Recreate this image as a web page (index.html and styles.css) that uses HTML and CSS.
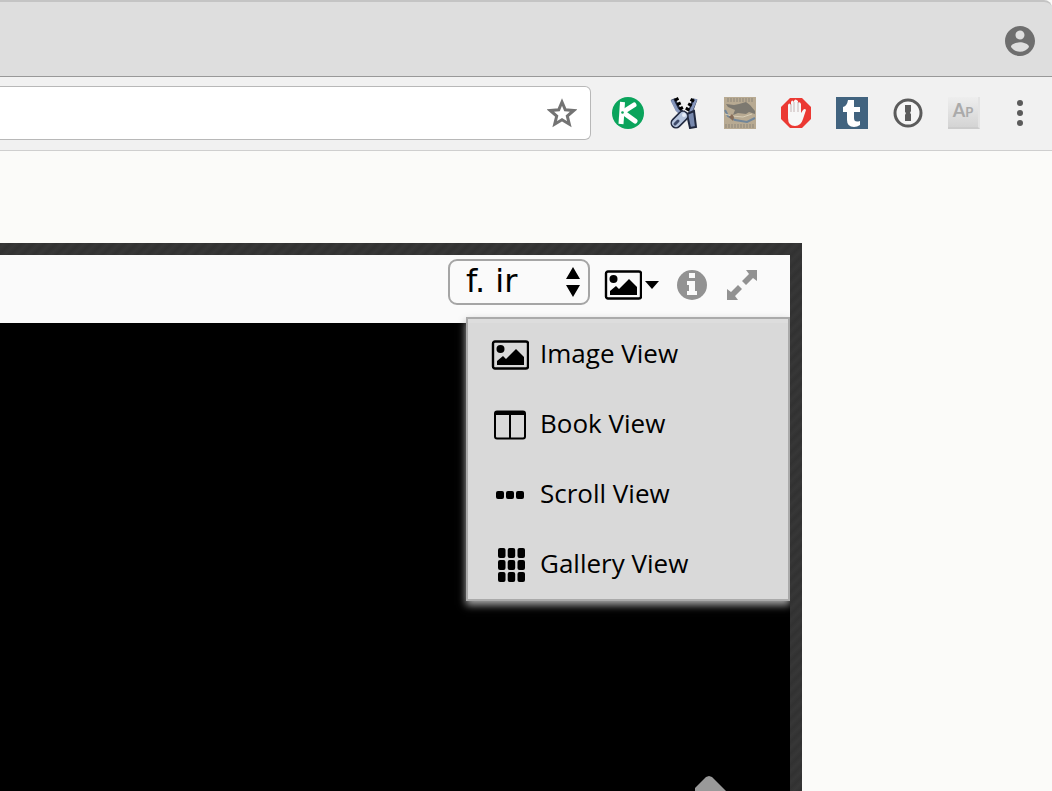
FILE: index.html
```
<!DOCTYPE html>
<html lang="en">
<head>
    <meta charset="utf-8">
    <title>Image Viewer</title>
    <link rel="stylesheet" href="styles.css">
</head>
<body>
    <div class="tab-strip">
        <button class="icon-button" aria-label="Profile">
            <svg width="36" height="36" viewBox="0 0 24 24"><path fill="#6e6e6e" d="M12 2C6.500 2 2 6.500 2 12s4.500 10 10 10 10-4.500 10-10S17.500 2 12 2zm0 3c1.700 0 3 1.300 3 3s-1.300 3-3 3-3-1.300-3-3 1.300-3 3-3zm0 14.200c-2.500 0-4.700-1.300-6-3.200 0-2 4-3.100 6-3.100s6 1.100 6 3.100c-1.300 1.900-3.500 3.200-6 3.200z"/></svg>
        </button>
    </div>
    <div class="browser-bar">
        <div class="address">
            <input type="text" aria-label="Address">
            <button class="icon-button" aria-label="Bookmark">
                <svg width="30" height="30" viewBox="0 0 30 30"><path fill="none" stroke="#737373" stroke-width="3" d="M15 4l3.300 7.800 8.400.7-6.400 5.500 2 8.200-7.300-4.400-7.300 4.400 2-8.200-6.400-5.500 8.400-.7z"/></svg>
            </button>
        </div>
        <div class="extensions">
            <button class="icon-button" aria-label="Kami">
                <svg width="32" height="32" viewBox="0 0 32 32"><circle cx="16" cy="16" r="16" fill="#0aa45c"/><path stroke="#fff" stroke-width="5" d="M10.500 5L9 27"/><path stroke="#fff" stroke-width="5" stroke-linecap="round" d="M11 15L22 8M12 16l11 8"/><circle cx="10.500" cy="15.500" r="1.300" fill="#0aa45c"/></svg>
            </button>
            <button class="icon-button" aria-label="Zipper">
                <svg width="32" height="32" viewBox="0 0 32 32"><path fill="none" stroke="#252d45" stroke-width="5" d="M5 2l5 10 6 6M27 2l-4 11 1 17"/><path fill="none" stroke="#8495bb" stroke-width="3" d="M4 3l5 10 7 6M28 2l-5 12v15"/><path stroke="#000" stroke-width="4" stroke-dasharray="3 2" d="M8 1l7 14M25 2l-7 13"/><path fill="#7788ad" stroke="#20283e" stroke-width="2" d="M19 17l7-3 2 16-6 1z"/><path stroke="#20283e" stroke-width="11" stroke-linecap="round" d="M15 19l-7 7"/><path stroke="#b5c4dd" stroke-width="8" stroke-linecap="round" d="M15 19l-7 7"/><path stroke="#3d4969" stroke-width="3" stroke-linecap="round" d="M10 24l-3 3"/><circle cx="16" cy="18" r="2" fill="#e6edf8"/></svg>
            </button>
            <button class="icon-button" aria-label="Medieval manuscript">
                <svg width="32" height="32" viewBox="0 0 32 32"><path fill="#b8aa92" d="M0 0h32v32H0z"/><path stroke="#8d867b" stroke-dasharray="2 1" d="M3 2h26M3 4h26M1 28h30M1 30h30"/><path fill="#7d7970" d="M2 7l8 1 5-1 7-2 4 3 5 6v3l-6-2-3 2-8-1-5 2 2-5-7-3z"/><path fill="none" stroke="#71869a" stroke-width="2" d="M1 13l3 6 7 4 12 2 8-4"/><path fill="none" stroke="#d8ceb7" d="M1 17l7 2 11 1 9-3"/><path fill="#876d59" d="M5 20l3-3 2 3-1 4z"/></svg>
            </button>
            <button class="icon-button" aria-label="Ad blocker">
                <svg width="32" height="32" viewBox="0 0 32 32"><path fill="#eb3933" d="M10 1h12l9 9v12l-9 9H10l-9-9V10z"/><path fill="#f7f7f7" d="M8 8q1-3 3 0V5q1-3 3 0V4q1-3 4 0v2q2-2 3 1v9l2-3q2-2 3 0l-3 9q-2 7-8 7-7 0-7-8z"/><path fill="none" stroke="#c5b5b5" d="M11 7v8M14 5v10M18 5v10"/></svg>
            </button>
            <button class="icon-button" aria-label="Tumblr">
                <svg width="32" height="32" viewBox="0 0 32 32"><path fill="#41637f" d="M0 0h32v32H0z"/><path fill="#fff" d="M12 3h6v7h6v5h-6v6q0 5 6 3v4q-3 2-6 2-7 0-7-7v-8H7v-5q4-1 5-7z"/></svg>
            </button>
            <button class="icon-button" aria-label="Password manager">
                <svg width="32" height="32" viewBox="0 0 32 32"><circle cx="16" cy="16" r="13" fill="#f5f5f5" stroke="#5b5b5b" stroke-width="3"/><path fill="#5b5b5b" d="M13 8h6v6l-1 2 1 1v7h-6v-6l1-2-1-1z"/></svg>
            </button>
            <button class="ap-button">Ap</button>
            <button class="icon-button" aria-label="Browser menu">
                <svg width="32" height="32" viewBox="0 0 32 32"><g fill="#5b5b5b"><circle cx="16" cy="6" r="3"/><circle cx="16" cy="16" r="3"/><circle cx="16" cy="26" r="3"/></g></svg>
            </button>
        </div>
    </div>
    <main class="page">
        <div class="viewer">
            <div class="toolbar">
                <div class="folio">
                    <select aria-label="Folio"><option>f. ir</option></select>
                    <svg width="16" height="30" viewBox="0 0 16 30"><path d="M1 12L8 0l7 12zM1 18h14L8 30z"/></svg>
                </div>
                <button class="view-button" aria-label="Change view">
                    <svg width="38" height="30" viewBox="0 0 38 30"><rect x="2" y="1.500" width="35" height="27" rx="2" fill="none" stroke="#000" stroke-width="2.400"/><circle cx="9.500" cy="9" r="4"/><path d="M6 25v-4l6-5 3 3 10-10 8 8v8z"/></svg>
                    <svg width="16" height="10" viewBox="0 0 16 10"><path d="M1 1h14L8 9z"/></svg>
                </button>
                <button class="icon-button info-button" aria-label="Information">
                    <svg width="30" height="30" viewBox="0 0 30 30"><circle cx="15" cy="15" r="15" fill="#929292"/><path fill="#fafafa" d="M12 3h6v5h-6zM10 11h8v10h2v4H10v-4h2v-6h-2z"/></svg>
                </button>
                <button class="icon-button" aria-label="Full screen">
                    <svg width="30" height="30" viewBox="0 0 30 30"><path fill="#929292" d="M19 0h11v11l-4-3-7 7-4-4 7-7zM0 19l4 3 7-7 4 4-7 7 3 4H0z"/></svg>
                </button>
            </div>
            <div class="canvas">
                <button class="pan-button" aria-label="Pan up"></button>
            </div>
            <div class="view-menu">
                <button>
                    <svg width="38" height="30" viewBox="0 0 38 30"><rect x="2" y="1.500" width="35" height="27" rx="2" fill="none" stroke="#000" stroke-width="2.400"/><circle cx="9.500" cy="9" r="4"/><path d="M6 25v-4l6-5 3 3 10-10 8 8v8z"/></svg>
                    <span>Image View</span>
                </button>
                <button>
                    <svg width="38" height="30" viewBox="0 0 38 30"><rect x="4" y="1.500" width="30" height="27" rx="2" fill="none" stroke="#000" stroke-width="2"/><path d="M18 3h2v25h-2zM4 1h30v4H4z"/></svg>
                    <span>Book View</span>
                </button>
                <button>
                    <svg width="38" height="30" viewBox="0 0 38 30"><rect x="5" y="11" width="8" height="8" rx="2"/><rect x="15" y="11" width="8" height="8" rx="2"/><rect x="25" y="11" width="8" height="8" rx="2"/></svg>
                    <span>Scroll View</span>
                </button>
                <button>
                    <svg width="38" height="36" viewBox="0 0 38 36"><g id="dots"><rect x="7" y="1" width="7.500" height="10" rx="2"/><rect x="16.700" y="1" width="7.500" height="10" rx="2"/><rect x="26.500" y="1" width="7.500" height="10" rx="2"/></g><use href="#dots" y="12"/><use href="#dots" y="24"/></svg>
                    <span>Gallery View</span>
                </button>
            </div>
        </div>
    </main>
</body>
</html>
```
FILE: styles.css
```
* {
    box-sizing: border-box;
}
body {
    margin: 0;
    min-height: 100vh;
    display: flex;
    flex-direction: column;
    overflow: hidden;
    background-color: #fbfbf9;
    color: #000;
    font-family: "Open Sans", sans-serif;
}
button {
    padding: 0;
    border: none;
    background: none;
    color: inherit;
    font-family: inherit;
    cursor: pointer;
}
svg {
    display: block;
    flex: none;
}
.tab-strip {
    height: 77px;
    padding: 4px 14px 0 0;
    display: flex;
    align-items: center;
    justify-content: flex-end;
    background-color: #dedede;
    border-top: 2px solid #c4c4c4;
    border-bottom: 1px solid #989898;
    border-top-right-radius: 8px;
}
.browser-bar {
    height: 74px;
    padding: 0 16px 2px 0;
    display: flex;
    align-items: center;
    gap: 21px;
    background-color: #f1f1f1;
    border-bottom: 1px solid #cfcfcf;
}
.address {
    flex: 1;
    height: 54px;
    padding-right: 13px;
    display: flex;
    align-items: center;
    background-color: #fff;
    border: 1px solid #b8b8b8;
    border-left: none;
    border-radius: 0 6px 6px 0;
}
.address input {
    flex: 1;
    min-width: 0;
    border: none;
    outline: none;
    font-size: 26px;
}
.extensions {
    display: flex;
    align-items: center;
    gap: 24px;
}
.ap-button {
    width: 32px;
    height: 32px;
    padding-bottom: 4px;
    background: linear-gradient(#eee, #d4d4d4);
    border-right: 2px solid #e4e4e4;
    border-bottom: 2px solid #ccc;
    color: #aaa;
    font-family: Lato, sans-serif;
    font-size: 18px;
    font-weight: bold;
    font-variant: small-caps;
}
.page {
    flex: 1;
    display: flex;
    padding: 92px 250px 0 0;
}
.viewer {
    flex: 1;
    position: relative;
    display: flex;
    flex-direction: column;
    overflow: hidden;
    border: 12px solid #333;
    border-left: none;
    border-bottom: none;
    border-image: repeating-linear-gradient(135deg, #313131 0, #373737 4px, #313131 8px) 12;
}
.toolbar {
    height: 68px;
    padding: 4px 33px 0 0;
    display: flex;
    align-items: flex-start;
    justify-content: flex-end;
    background-color: #fafafa;
}
.toolbar .icon-button,
.view-button {
    margin-top: 11px;
}
.folio {
    display: grid;
    align-items: center;
    margin-right: 14px;
}
.folio select,
.folio svg {
    grid-area: 1 / 1;
}
.folio svg {
    justify-self: end;
    margin-right: 9px;
    pointer-events: none;
}
.folio select {
    width: 142px;
    height: 46px;
    padding: 0 32px 2px 16px;
    appearance: none;
    background-color: #fafafa;
    border: 2px solid #a5a5a5;
    border-radius: 9px;
    color: #000;
    font-family: "DejaVu Sans", sans-serif;
    font-size: 32px;
    line-height: 38px;
}
.view-button {
    display: flex;
    align-items: center;
    gap: 2px;
}
.info-button {
    margin-left: 17px;
    margin-right: 20px;
}
.canvas {
    flex: 1;
    padding-right: 61px;
    display: flex;
    align-items: flex-end;
    justify-content: flex-end;
    background-color: #000;
}
.pan-button {
    width: 34px;
    height: 15px;
    background-color: #999;
    clip-path: polygon(0 100%, 0 12px, 11px 1px, 14px 0, 17px 1px, 31px 100%);
}
.view-menu {
    position: absolute;
    top: 62px;
    right: 0;
    width: 324px;
    background-color: rgba(220, 220, 220, 0.984);
    border: 2px solid #aaa;
    box-shadow: 0 4px 8px #aaa;
}
.view-menu button {
    width: 100%;
    height: 70px;
    padding-left: 23px;
    display: flex;
    align-items: center;
    gap: 11px;
    font-size: 26px;
    font-weight: 500;
}
.view-menu svg {
    margin-top: 2px;
}
.view-menu span {
    padding-bottom: 2px;
}
```
